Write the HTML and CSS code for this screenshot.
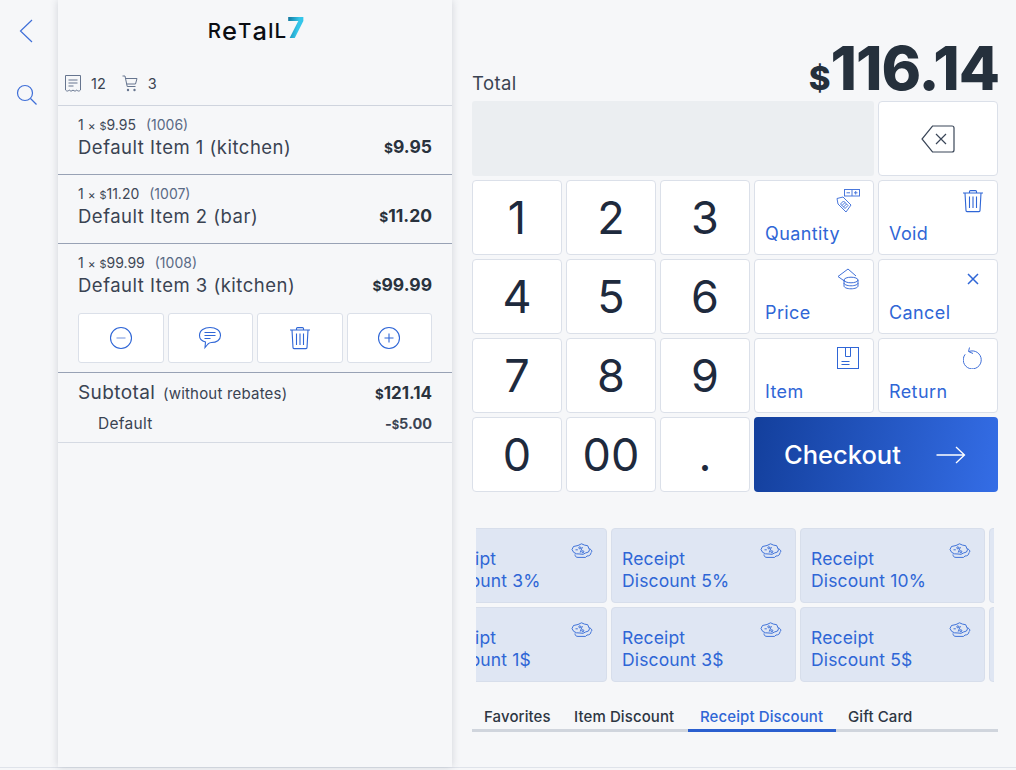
FILE: index.html
```html
<!DOCTYPE html>
<html lang="en">
<head>
<meta charset="utf-8">
<title>Retail7 POS</title>
<link rel="stylesheet" href="styles.css">
</head>
<body>
<svg class="defs" width="0" height="0" aria-hidden="true">
  <defs>
    <symbol id="i-trash" viewBox="0 0 22 24"><g fill="none" stroke="currentColor" stroke-width="1.1"><path d="M1 4h20M7.500 4V2.600c0-.6.400-1 1-1h5c.6 0 1 .4 1 1V4M3 4l1 17.600c0 .6.500 1 1 1h12c.5 0 1-.4 1-1L19 4M7.500 7.500v11.500M11 7.500v11.500M14.500 7.500v11.500"/></g></symbol>
    <symbol id="i-disc" viewBox="0 0 22 17"><g fill="none" stroke="currentColor" stroke-width=".9"><path d="M2.500 3.500 7 2.500 10.500.8l3 1.300 3.200.6 1 2.300.8 1.800-1 2.200-3 1-2.500 1.300L9 11l-3.500-.2-2.800-1.400L1 6.500z"/><path d="M18.500 5.500l1.800 1.500c.8 1 .6 2-.3 2.600-.2 2.400-1.500 3.400-4 3.400l-1.500 1.400H7c-2 0-3-1-3-3"/><path d="M4.500 6.800h2.300M11.400 4l-2.200 5.600"/><circle cx="8.800" cy="4.800" r="1"/><circle cx="11.800" cy="8.700" r="1"/></g></symbol>
  </defs>
</svg>
<div class="app">
  <nav class="rail">
    <button class="rail-btn rail-back" aria-label="Back">
      <svg width="14" height="24" viewBox="0 0 14 24"><path d="M13 1 1.500 12 13 23" fill="none" stroke="#3f6fd8" stroke-width="1.200"/></svg>
    </button>
    <button class="rail-btn rail-search" aria-label="Search">
      <svg width="22" height="22" viewBox="0 0 22 22"><circle cx="9" cy="9" r="7.500" fill="none" stroke="#3f6fd8" stroke-width="1.200"/><path d="m14.500 14.500 6 6" fill="none" stroke="#3f6fd8" stroke-width="1.200"/></svg>
    </button>
  </nav>

  <aside class="side">
    <div class="logo"><span class="lg">R</span><span class="lg lg-low">e</span><span class="lg">T</span><span class="lg lg-low">a</span><span class="lg">I</span><span class="lg">L</span><span class="lg-seven">7</span></div>
    <div class="counts">
      <svg class="count-ic" width="16" height="17" viewBox="0 0 16 17"><path d="M.5.500h15v14.500c-1.200 1.400-2.500 1.400-3.700 0-1.200 1.400-2.500 1.400-3.800 0-1.300 1.400-2.600 1.400-3.800 0-1.200 1.400-2.500 1.400-3.700 0zM3.500 5h9M3.500 8h9M3.500 11h5" fill="none" stroke="#66758f" stroke-width="1"/></svg>
      <span class="count-num">12</span>
      <svg class="count-ic count-cart" width="16" height="17" viewBox="0 0 16 17"><path d="M.5 1h2.500l2.200 10.500h8.300M3.500 3.500H15L13.500 9H4.500" fill="none" stroke="#66758f" stroke-width="1"/><circle cx="6" cy="15" r="1.200" fill="#66758f"/><circle cx="12.500" cy="15" r="1.200" fill="#66758f"/></svg>
      <span class="count-num">3</span>
    </div>

    <div class="item">
      <div class="meta"><span>1 <i>×</i> <small>$</small>9.95</span><span class="id">(1006)</span></div>
      <div class="line"><span>Default Item 1 (kitchen)</span><b><small>$</small>9.95</b></div>
    </div>
    <div class="item">
      <div class="meta"><span>1 <i>×</i> <small>$</small>11.20</span><span class="id">(1007)</span></div>
      <div class="line"><span>Default Item 2 (bar)</span><b><small>$</small>11.20</b></div>
    </div>
    <div class="item item-open">
      <div class="meta"><span>1 <i>×</i> <small>$</small>99.99</span><span class="id">(1008)</span></div>
      <div class="line"><span>Default Item 3 (kitchen)</span><b><small>$</small>99.99</b></div>
      <div class="actions">
        <button class="act" aria-label="Decrease"><svg width="24" height="24" viewBox="0 0 24 24"><g fill="none" stroke="#2f66d6" stroke-width="1.100"><circle cx="12" cy="12" r="10.500"/><path d="M7.500 12h9" stroke="#7d9be0"/></g></svg></button>
        <button class="act" aria-label="Comment"><svg width="24" height="24" viewBox="0 0 24 24"><g fill="none" stroke="#2f66d6" stroke-width="1.100"><path d="M12 1.500c5.500 0 10.500 2.500 10.500 8 0 4.500-4 7-9 7-1.500 0-2.500.5-3.500 1.500l-3 3.500.5-5.500C3.500 15 1.500 12.500 1.500 9.500c0-5.500 5-8 10.500-8z"/><path d="M6.500 6.500h11M6.500 9.500h11M6.500 12.500h6"/></g></svg></button>
        <button class="act act-trash" aria-label="Delete"><svg width="22" height="24"><use href="#i-trash"/></svg></button>
        <button class="act" aria-label="Increase"><svg width="24" height="24" viewBox="0 0 24 24"><g fill="none" stroke="#2f66d6" stroke-width="1.100"><circle cx="12" cy="12" r="10.500"/><path d="M7.500 12h9M12 7.500v9"/></g></svg></button>
      </div>
    </div>
    <div class="subtotal">
      <div class="sub-main"><span>Subtotal <em>(without rebates)</em></span><b><small>$</small>121.14</b></div>
      <div class="sub-row"><span>Default</span><b>-<small>$</small>5.00</b></div>
    </div>
  </aside>

  <main class="main">
    <div class="total"><span class="total-label">Total</span><span class="total-val"><small>$</small>116.14</span></div>
    <div class="pad">
      <div class="display"></div>
      <button class="key key-back" aria-label="Backspace"><svg width="34" height="28" viewBox="0 0 34 28"><g fill="none" stroke="#3a4658" stroke-width="1.200"><path d="M11.500 1H31c1.200 0 2 .8 2 2v22c0 1.200-.8 2-2 2H11.500L1 14z"/><path d="m15 9 10 10M25 9 15 19"/></g></svg></button>
      <button class="key num">1</button><button class="key num">2</button><button class="key num">3</button>
      <button class="key fn"><svg class="fn-ic" width="24" height="24" viewBox="0 0 24 24"><g fill="none" stroke="#4a78dc" stroke-width="1"><rect x="8.500" y=".5" width="15" height="6.500"/><path d="M16 .5V7M10.500 3.800h3.500M18 3.800h3.500M19.700 2v3.500"/><path d="M1 9.500 7 8l8 8-5 7-8-8z"/><path d="M7.500 12l4.500 4.500-3 3-4.500-4.500zM9 13.500l-3 3M10.500 15l-3 3"/></g></svg><span>Quantity</span></button>
      <button class="key fn"><svg class="fn-ic fn-trash" width="22" height="24"><use href="#i-trash"/></svg><span>Void</span></button>
      <button class="key num">4</button><button class="key num">5</button><button class="key num">6</button>
      <button class="key fn"><svg class="fn-ic fn-r1" width="22" height="24" viewBox="0 0 22 24"><g fill="none" stroke="#3f6fd8" stroke-width="1"><path d="M8 13.500 1 8.500 11 1l8 7"/><ellipse cx="14" cy="12" rx="7" ry="2.800"/><path d="M7 12v6c0 1.500 3 2.800 7 2.800s7-1.300 7-2.800v-6M7 15c0 1.500 3 2.800 7 2.800s7-1.300 7-2.800"/></g></svg><span>Price</span></button>
      <button class="key fn"><svg class="fn-ic fn-x" width="12" height="12" viewBox="0 0 12 12"><path d="m1 1 10 10M11 1 1 11" fill="none" stroke="#2f66d6" stroke-width="1.500"/></svg><span>Cancel</span></button>
      <button class="key num">7</button><button class="key num">8</button><button class="key num">9</button>
      <button class="key fn"><svg class="fn-ic fn-r1" width="22" height="22" viewBox="0 0 22 22"><g fill="none" stroke="#2f66d6" stroke-width="1"><rect x=".5" y=".5" width="21" height="21"/><path d="M8.500.5v9h5v-9M4.500 14.500h8M4.500 17.500h8"/></g></svg><span>Item</span></button>
      <button class="key fn"><svg class="fn-ic fn-r1" width="20" height="22" viewBox="0 0 20 22"><g fill="none" stroke="#3f6fd8" stroke-width="1"><path d="M6 4.500a9 9 0 1 1-3.800 2.800"/><path d="M6.500.5l-1 4 4.500 2"/></g></svg><span>Return</span></button>
      <button class="key num">0</button><button class="key num">00</button><button class="key num">.</button>
      <button class="checkout"><span>Checkout</span><svg width="30" height="18" viewBox="0 0 30 18"><path d="M.5 9h28M20 1l8.500 8-8.500 8" fill="none" stroke="#fff" stroke-width="1.300"/></svg></button>
    </div>

    <div class="carousel">
      <div class="tiles">
        <button class="tile"><span>Receipt<br>Discount 3%</span><svg class="disc" width="22" height="17"><use href="#i-disc"/></svg></button>
        <button class="tile"><span>Receipt<br>Discount 5%</span><svg class="disc" width="22" height="17"><use href="#i-disc"/></svg></button>
        <button class="tile"><span>Receipt<br>Discount 10%</span><svg class="disc" width="22" height="17"><use href="#i-disc"/></svg></button>
        <button class="tile"></button>
        <button class="tile"><span>Receipt<br>Discount 1$</span><svg class="disc" width="22" height="17"><use href="#i-disc"/></svg></button>
        <button class="tile"><span>Receipt<br>Discount 3$</span><svg class="disc" width="22" height="17"><use href="#i-disc"/></svg></button>
        <button class="tile"><span>Receipt<br>Discount 5$</span><svg class="disc" width="22" height="17"><use href="#i-disc"/></svg></button>
        <button class="tile"></button>
      </div>
    </div>

    <div class="tabs">
      <span class="tab tab-fav">Favorites</span>
      <span class="tab tab-item">Item Discount</span>
      <span class="tab tab-on">Receipt Discount</span>
      <span class="tab tab-gift">Gift Card</span>
    </div>
  </main>
</div>
</body>
</html>
```
FILE: styles.css
```css
* { box-sizing: border-box; }
html, body { margin: 0; height: 100%; }
body {
  background: #f6f7f9;
  color: #29323d;
  font-family: Inter, "Noto Sans", sans-serif;
  overflow: hidden;
}
button { font-family: inherit; padding: 0; cursor: pointer; }
small { font-size: .78em; }
.defs { position: absolute; }

.app {
  display: flex;
  height: 768px;
  border-bottom: 1px solid #dfe3ea;
}
.rail {
  width: 58px;
  flex: none;
  display: flex;
  flex-direction: column;
  align-items: flex-start;
}
.rail-btn { background: none; border: 0; display: block; line-height: 0; }
.rail-back { margin: 19px 0 0 19px; }
.rail-search { margin: 41px 0 0 16px; }

.side {
  width: 394px;
  flex: none;
  background: #f6f7f9;
  box-shadow: 0 0 8px rgba(60, 70, 90, .2);
}
.logo {
  height: 62px;
  display: flex;
  justify-content: center;
  align-items: flex-end;
  padding: 0 0 23px 2px;
  color: #0b0d12;
  font-size: 20.500px;
  line-height: 16px;
  font-weight: 500;
}
.lg { letter-spacing: 1px; }
.lg-low { font-size: 25.500px; font-weight: 500; }
.lg-seven {
  font-size: 29px;
  font-weight: 800;
  line-height: 22px;
  background: linear-gradient(100deg, #0f6f96 0%, #34c6ea 60%);
  -webkit-background-clip: text;
  background-clip: text;
  color: transparent;
}
.counts {
  height: 44px;
  display: flex;
  align-items: center;
  padding: 0 0 0 7px;
  font-size: 14.500px;
  color: #3a4352;
  border-bottom: 1px solid #cfd4de;
}
.count-num { margin-left: 10px; }
.count-cart { margin-left: 16px; }

.item {
  height: 69px;
  padding: 10px 20px 0;
  border-bottom: 1px solid #98a2b5;
}
.item-open { height: 129px; }
.meta {
  display: flex;
  gap: 10px;
  height: 17px;
  font-size: 14px;
  line-height: 17px;
  color: #3e4756;
}
.meta i { font-style: normal; font-size: .85em; }
.meta .id { color: #5a6a85; }
.line {
  display: flex;
  justify-content: space-between;
  margin-top: 2px;
  font-size: 18.500px;
  line-height: 24px;
  letter-spacing: .5px;
  color: #3a4352;
}
.line b, .sub-main b { font-weight: 700; font-size: 17.500px; color: #29323d; letter-spacing: 0; }
.actions {
  display: grid;
  grid-template-columns: repeat(4, 1fr);
  gap: 4px;
  margin-top: 15px;
}
.act {
  height: 50px;
  background: #fff;
  border: 1px solid #dbe0e9;
  border-radius: 3px;
  display: flex;
  align-items: center;
  justify-content: center;
}
.act-trash { color: #2f66d6; }

.subtotal {
  height: 70px;
  padding: 8px 20px 0;
  border-bottom: 1px solid #d5dae3;
}
.sub-main {
  display: flex;
  justify-content: space-between;
  font-size: 19px;
  line-height: 24px;
  letter-spacing: .4px;
  color: #3a4352;
}
.sub-main b { font-size: 17px; }
.sub-main em { font-style: normal; font-size: 15px; letter-spacing: .2px; margin-left: 2px; }
.sub-row {
  display: flex;
  justify-content: space-between;
  padding-left: 20px;
  margin-top: 8px;
  font-size: 15.500px;
  letter-spacing: .3px;
  line-height: 20px;
  color: #3a4352;
}
.sub-row b { font-weight: 700; font-size: 14.500px; letter-spacing: 0; }

.main {
  flex: 1;
  min-width: 0;
  padding: 0 18px 0 20px;
}
.total {
  height: 101px;
  display: flex;
  justify-content: space-between;
  align-items: flex-end;
}
.total-label { font-size: 18.500px; letter-spacing: .4px; line-height: 22px; margin-bottom: 7px; color: #3a4352; }
.total-val {
  font-size: 60px;
  font-weight: 800;
  line-height: 44px;
  letter-spacing: -1px;
  margin: 0 -1px 1px 0;
  color: #25303c;
}
.total-val small { font-size: 33px; margin-right: 1px; }

.pad {
  display: grid;
  grid-template-columns: 90px 90px 90px 120px 120px;
  grid-auto-rows: 75px;
  gap: 4px;
}
.display {
  grid-column: span 4;
  background: #ebeef1;
  border-radius: 3px;
}
.key {
  background: #fff;
  border: 1px solid #dbe0e9;
  border-radius: 4px;
  position: relative;
  color: #1e2a3d;
}
.key-back { display: flex; align-items: center; justify-content: center; }
.num { font-size: 45px; font-weight: 400; line-height: 1; }
.fn {
  color: #2f66d6;
  font-size: 18px;
  letter-spacing: .4px;
  text-align: left;
  display: flex;
  flex-direction: column;
  justify-content: space-between;
  padding: 8px 13px 9px 10px;
}
.fn-ic { align-self: flex-end; flex: none; }
.fn-r1 { color: #2f66d6; margin-right: 1px; }
.fn-trash { color: #2f66d6; }
.fn-x { margin: 5px 5px 0 0; }
.fn span { line-height: 22px; }
.checkout {
  grid-column: span 2;
  border: 0;
  border-radius: 4px;
  background: linear-gradient(100deg, #133f9c 0%, #346de6 100%);
  color: #fff;
  font-size: 25.500px;
  font-weight: 500;
  display: flex;
  justify-content: space-between;
  align-items: center;
  padding: 0 32px 0 30px;
}

.carousel {
  margin: 36px 4px 0 4px;
  overflow: hidden;
  height: 154px;
}
.tiles {
  display: grid;
  grid-template-columns: repeat(4, 185px);
  grid-auto-rows: 75px;
  gap: 4px;
  margin-left: -54px;
  width: 760px;
}
.tile {
  background: #dfe6f3;
  border: 1px solid #d7deeb;
  border-radius: 4px;
  color: #2f66d6;
  display: flex;
  justify-content: space-between;
  align-items: flex-start;
  text-align: left;
  font-size: 17.500px;
  letter-spacing: .15px;
  line-height: 22px;
  padding: 19px 13px 0 10px;
}
.disc { margin-top: -5px; flex: none; color: #2f66d6; }

.tabs {
  display: flex;
  margin-top: 24px;
  height: 26px;
  border-bottom: 3px solid #d0d5dd;
  font-size: 15px;
  letter-spacing: .1px;
  font-weight: 500;
  line-height: 20px;
  color: #2d3643;
}
.tab { display: block; height: 26px; padding: 1px 12px 0; white-space: nowrap; }
.tab-fav { width: 90px; }
.tab-item { width: 126px; }
.tab-on { width: 148px; color: #2f66d6; border-bottom: 3px solid #2a5fcf; }
```
